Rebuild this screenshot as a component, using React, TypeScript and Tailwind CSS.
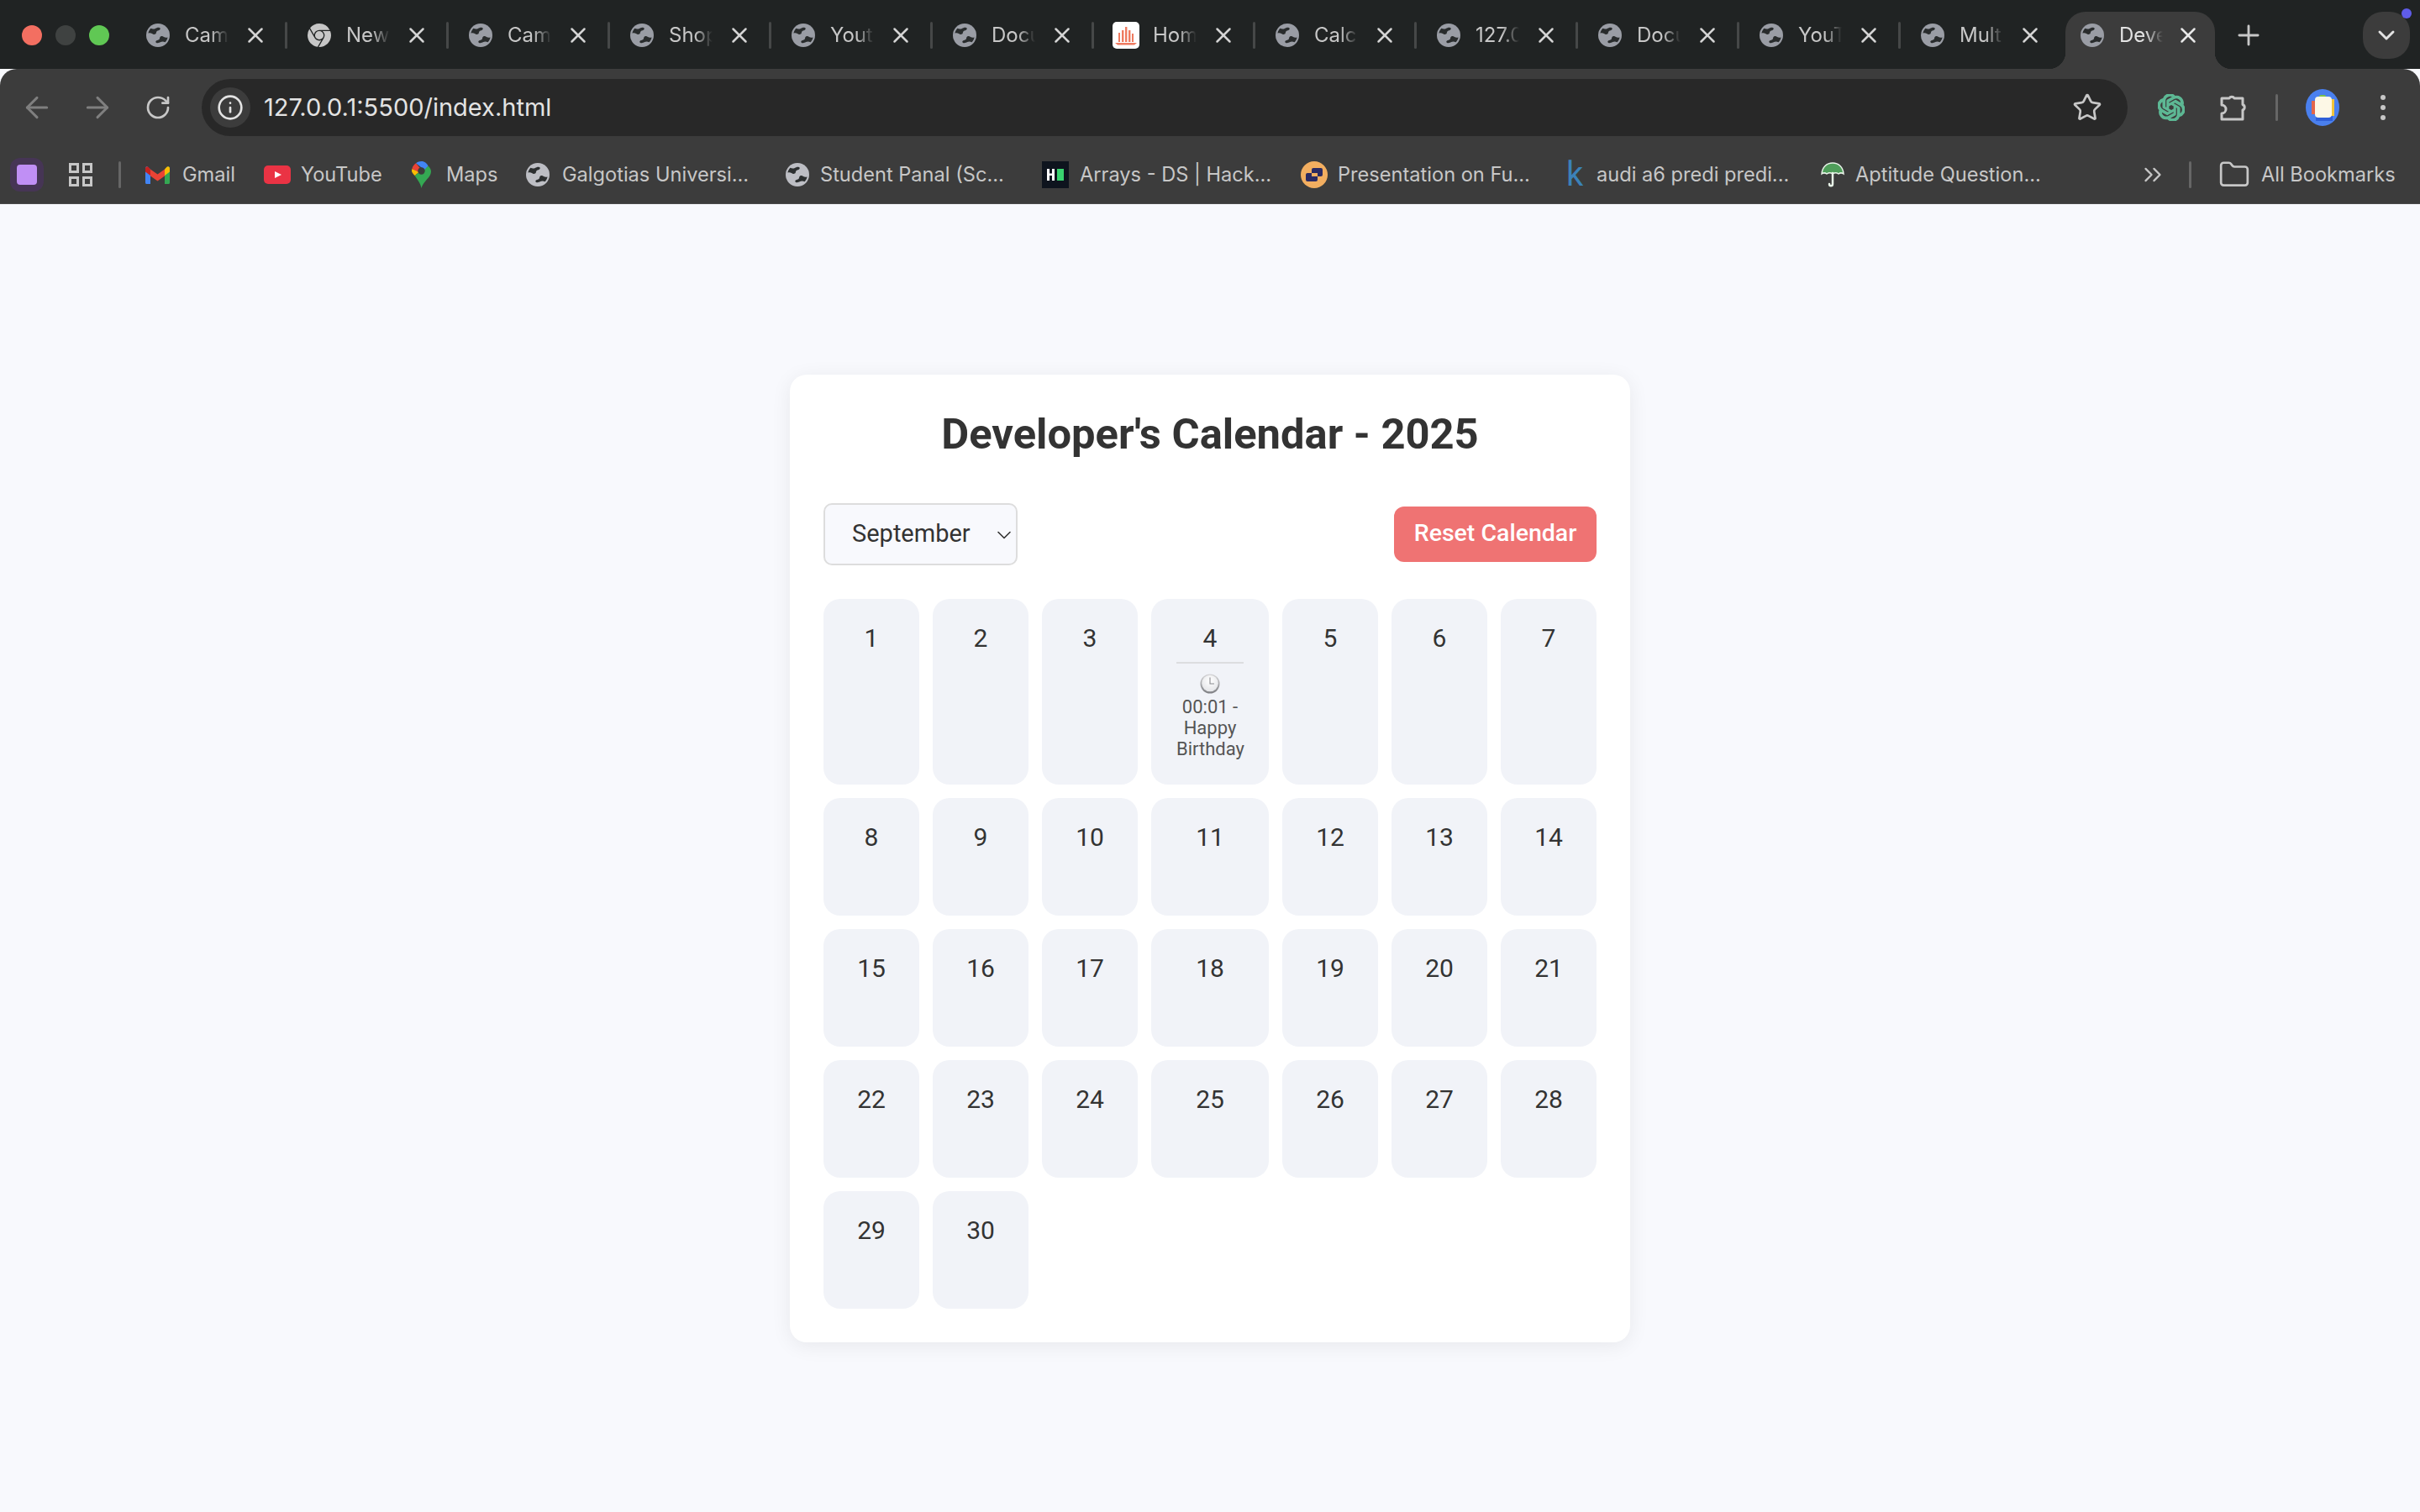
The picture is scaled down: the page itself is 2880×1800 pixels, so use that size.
import React from "react";
import { ArrowLeft, ArrowRight, RotateCw, Info, Star, X, Plus, ChevronDown, ChevronsRight, Folder } from "lucide-react";
import { SiOpenai, SiGooglechrome } from "react-icons/si";

const ui = "font-['Inter','Noto_Sans',sans-serif]";

function Globe({ className }: { className: string }) {
  return (
    <svg viewBox="0 0 16 16" className={className}>
      <circle cx="8" cy="8" r="8" fill="currentColor" />
      <path fill="#202323" fillOpacity="0.92" d="M3.1 3.3c1.1.5 2.2.5 3.1.1.9-.4 1.8-1 2.9-.5.7.3.6 1.1-.1 1.5-.8.4-1.6.5-2 1.1-.4.7-.1 1.3-.8 1.7-.7.4-1.5.2-2.2-.3-.8-.5-1.5-.6-2.6-.3.1-1.2.9-2.4 1.700-3.300z" />
      <path fill="#202323" fillOpacity="0.92" d="M12.9 12.7c-1.1-.5-2.2-.5-3.1-.1-.9.4-1.8 1-2.9.5-.7-.3-.6-1.1.1-1.5.8-.4 1.6-.5 2-1.1.4-.7.1-1.3.8-1.7.7-.4 1.5-.2 2.2.3.8.5 1.5.6 2.6.3-.1 1.2-.9 2.4-1.700 3.300z" />
    </svg>
  );
}

function HomeFav() {
  return (
    <div className="w-[32px] h-[32px] rounded-[5px] bg-white flex items-center justify-center">
      <svg viewBox="0 0 32 32" className="w-[32px] h-[32px]">
        <g fill="#ee7a5f">
          <rect x="7" y="13" width="2" height="11" />
          <rect x="11" y="10" width="2.4" height="14" />
          <rect x="15" y="6" width="2.4" height="18" />
          <rect x="19" y="10" width="2.4" height="14" />
          <rect x="23" y="14" width="2" height="10" />
          <path d="M3 25h26l-3 2.5H6z" />
        </g>
      </svg>
    </div>
  );
}

const tabs = [
  { t: "Cam", i: "g" },
  { t: "New", i: "c" },
  { t: "Cam", i: "g" },
  { t: "Shop", i: "g" },
  { t: "Yout", i: "g" },
  { t: "Docu", i: "g" },
  { t: "Hom", i: "h" },
  { t: "Calc", i: "g" },
  { t: "127.0", i: "g" },
  { t: "Docu", i: "g" },
  { t: "YouT", i: "g" },
  { t: "Mult", i: "g", last: true },
];

function Tab({ t, i, last }: { t: string; i: string; last?: boolean }) {
  return (
    <div className="w-[192px] h-[56px] flex items-center shrink-0">
      <div className="w-[24px] shrink-0" />
      <div className="w-[28px] flex items-center justify-center shrink-0">
        {i === "g" && <Globe className="w-[28px] h-[28px] text-[#9a9da5]" />}
        {i === "c" && <SiGooglechrome className="w-[28px] h-[28px] text-[#c7c7c7]" />}
        {i === "h" && <HomeFav />}
      </div>
      <div className="w-[18px] shrink-0" />
      <div className="w-[52px] overflow-hidden whitespace-nowrap text-[24px] leading-[32px] text-[#c7c7c7] [mask-image:linear-gradient(to_right,black_60%,transparent)]">
        {t}
      </div>
      <div className="w-[32px] flex justify-center ml-[16px] shrink-0">
        <X size={30} strokeWidth={2} className="text-[#d4d4d4]" />
      </div>
      <div className="flex-1" />
      <div className={"w-[3px] h-[32px] rounded-full " + (last ? "bg-transparent" : "bg-[#464848]")} />
    </div>
  );
}

function GmailIcon() {
  return (
    <svg viewBox="0 0 29 21" className="w-[29px] h-[21px]">
      <path fill="#4285f4" d="M0 2.5C0 1 1 0 2 0l4 3.5V21H1.5C.6 21 0 20.4 0 19.5z" />
      <path fill="#34a853" d="M29 2.5C29 1 28 0 27 0l-4 3.5V21h4.5c.9 0 1.5-.6 1.5-1.5z" />
      <path fill="#ea4335" d="M6 3.5v8l8.5 6 8.5-6v-8l-8.500 6z" />
      <path fill="#c5221f" d="M0 2.5v4L6 11V3.500L3.500.7C2-.5 0 .5 0 2.500z" />
      <path fill="#fbbc04" d="M29 2.5v4L23 11V3.500L25.500.7C27-.5 29 .5 29 2.500z" />
    </svg>
  );
}

function YouTubeIcon() {
  return (
    <svg viewBox="0 0 32 22" className="w-[32px] h-[22px]">
      <rect width="32" height="22" rx="5" fill="#ea3344" />
      <path d="M13 7l8 4-8 4z" fill="#fff" />
    </svg>
  );
}

function MapsIcon() {
  return (
    <svg viewBox="0 0 23 32" className="w-[23px] h-[32px]">
      <path fill="#34a853" d="M11.5 32C10 25 6 21 3.500 17L19.500 5.500c2.200 2 3.500 4.500 3.500 6.800 0 7-9 11-11.500 19.700z" />
      <path fill="#fbbc04" d="M3.500 17C1.500 15 0 13 0 11.500c0-.5 0-1.500.4-2.500L9 12.500z" />
      <path fill="#ea4335" d="M.4 9C1 6 3 3.500 5 2.300l5 6-2 4.500z" />
      <path fill="#4285f4" d="M5 2.300C7 .7 9 0 11.500 0c3 0 6 1.500 8 5.500L15 10l-4-3z" />
      <circle cx="11.500" cy="11.500" r="4.200" fill="#3c3c3c" />
    </svg>
  );
}

function HackIcon() {
  return (
    <svg viewBox="0 0 32 32" className="w-[32px] h-[32px]">
      <rect width="32" height="32" fill="#0e141e" />
      <path fill="#fff" d="M6 9h3v5.500h3V9h3v14h-3v-6H9v6H6z" />
      <rect x="18" y="9" width="8" height="14" fill="#39d36f" />
    </svg>
  );
}

function PresIcon() {
  return (
    <svg viewBox="0 0 32 32" className="w-[32px] h-[32px]">
      <circle cx="16" cy="16" r="16" fill="#f2ae60" />
      <rect x="13" y="8" width="13" height="10" rx="2" fill="#2a2a62" />
      <rect x="6" y="14" width="14" height="10" rx="2" fill="#2a2a62" />
      <rect x="13" y="14" width="7" height="4" fill="#f2ae60" />
    </svg>
  );
}

function UmbrellaIcon() {
  return (
    <svg viewBox="0 0 28 32" className="w-[28px] h-[32px]">
      <path d="M14 2C7 2 1.500 7 1 15c2-1.500 4-1.500 6 0 2-1.500 5-1.500 7 0 2-1.500 5-1.500 7 0 2-1.500 4-1.500 6 0C26.500 7 21 2 14 2z" fill="#4f9e5a" stroke="#e8f3e8" strokeWidth="1.500" />
      <path d="M14 14v13c0 3-4 3-4 0" fill="none" stroke="#e8f3e8" strokeWidth="2.500" strokeLinecap="round" />
    </svg>
  );
}

const bookmarks = [
  { w: "w-[141px]", icon: <GmailIcon />, gap: "w-[15px]", t: "Gmail" },
  { w: "w-[176px]", icon: <YouTubeIcon />, gap: "w-[12px]", t: "YouTube" },
  { w: "w-[136px]", icon: <MapsIcon />, gap: "w-[18px]", t: "Maps" },
  { w: "w-[309px]", icon: <Globe className="w-[28px] h-[28px] text-[#bdbec4]" />, gap: "w-[15px]", t: "Galgotias Universi..." },
  { w: "w-[305px]", icon: <Globe className="w-[28px] h-[28px] text-[#bdbec4]" />, gap: "w-[13px]", t: "Student Panal (Sc..." },
  { w: "w-[308px]", icon: <HackIcon />, gap: "w-[13px]", t: "Arrays - DS | Hack..." },
  { w: "w-[316px]", icon: <PresIcon />, gap: "w-[12px]", t: "Presentation on Fu..." },
  { w: "w-[303px]", icon: <span className="block w-[22px] text-[40px] leading-[40px] font-['Roboto',sans-serif] text-[#3b82b8]">k</span>, gap: "w-[14px]", t: "audi a6 predi predi..." },
  { w: "w-[370px]", icon: <UmbrellaIcon />, gap: "w-[13px]", t: "Aptitude Question..." },
];

function ClockEmoji() {
  return (
    <svg viewBox="0 0 24 24" className="w-[24px] h-[24px] mx-auto">
      <defs>
        <linearGradient id="clockRim" x1="0" y1="0" x2="0" y2="1">
          <stop offset="0" stopColor="#d6d6d8" />
          <stop offset="1" stopColor="#7f8084" />
        </linearGradient>
        <radialGradient id="clockFace" cx="0.5" cy="0.35" r="0.7">
          <stop offset="0" stopColor="#ffffff" />
          <stop offset="1" stopColor="#e2e3e6" />
        </radialGradient>
      </defs>
      <circle cx="12" cy="12" r="11.500" fill="url(#clockRim)" />
      <circle cx="12" cy="11.500" r="9.800" fill="url(#clockFace)" />
      <path d="M12 4.500V12h5" fill="none" stroke="#8a8b90" strokeWidth="1.100" />
    </svg>
  );
}

function Cell({ n, tall }: { n: number; tall?: boolean }) {
  return (
    <div className={"bg-[#f1f3f8] rounded-[20px] flex flex-col items-center text-center pt-[30px] " + (tall ? "h-[221px]" : "h-[140px]")}>
      <div className="text-[30px] leading-[34px] text-[#333333]">{n}</div>
      {n === 4 && (
        <div className="w-[80px] mt-[11px]">
          <div className="h-[2px] bg-[#dcdddf]" />
          <div className="mt-[12px] text-[22px] leading-[25px] text-[#555555]">
            <ClockEmoji />
            <div className="mt-[3px]">00:01 - Happy Birthday</div>
          </div>
        </div>
      )}
    </div>
  );
}

export default function App() {
  const days = Array.from({ length: 30 }, (_, i) => i + 1);
  return (
    <div className="min-h-[1800px] h-[1800px] flex flex-col bg-[#f8f9fd] overflow-hidden">
      {/* Tab strip */}
      <div className={"h-[82px] bg-[#202323] flex items-start pt-[14px] shrink-0 " + ui}>
        <div className="w-[150px] h-[56px] flex items-center shrink-0 pl-[26px] gap-[16px]">
          <span className="w-[24px] h-[24px] rounded-full bg-[#f36f61]" />
          <span className="w-[24px] h-[24px] rounded-full bg-[#3f4241]" />
          <span className="w-[24px] h-[24px] rounded-full bg-[#60c854]" />
        </div>
        {tabs.map((t, i) => (
          <Tab key={i} t={t.t} i={t.i} last={t.last} />
        ))}
        <div className="relative w-[178px] h-[68px] ml-[4px] bg-[#3c3c3c] rounded-t-[24px] shrink-0">
          <div className="absolute left-[-20px] bottom-0 w-[20px] h-[20px] bg-[radial-gradient(circle_at_0_0,transparent_20px,#3c3c3c_20.5px)]" />
          <div className="absolute right-[-20px] bottom-0 w-[20px] h-[20px] bg-[radial-gradient(circle_at_100%_0,transparent_20px,#3c3c3c_20.5px)]" />
          <div className="h-[56px] flex items-center pl-[18px]">
            <Globe className="w-[28px] h-[28px] text-[#9a9da5] shrink-0" />
            <div className="ml-[18px] w-[52px] overflow-hidden whitespace-nowrap text-[24px] leading-[32px] text-[#e3e3e3] [mask-image:linear-gradient(to_right,black_60%,transparent)]">Deve</div>
            <X size={30} strokeWidth={2} className="ml-[15px] text-[#e8e8e8] shrink-0" />
          </div>
        </div>
        <div className="ml-[21px] w-[38px] h-[56px] flex items-center justify-center shrink-0">
          <Plus size={38} strokeWidth={1.8} className="text-[#c7c7c7]" />
        </div>
        <div className="relative ml-[117px] w-[56px] h-[56px] rounded-[24px] bg-[#3c3c3c] flex items-center justify-center shrink-0">
          <ChevronDown size={32} strokeWidth={2.2} className="text-[#e3e3e3]" />
          <span className="absolute right-[-2px] top-[-4px] w-[12px] h-[12px] rounded-full bg-[#5f5ce8]" />
        </div>
      </div>

      {/* Toolbar + bookmarks */}
      <div className={"bg-[#3c3c3c] rounded-t-[20px] h-[161px] shrink-0 border-b border-[#4a4a4a] " + ui}>
        <div className="h-[92px] pt-[12px] pl-[8px] flex items-start">
          <div className="w-[72px] h-[68px] flex items-center justify-center">
            <ArrowLeft size={40} strokeWidth={1.8} className="text-[#7f7f7f]" />
          </div>
          <div className="w-[72px] h-[68px] flex items-center justify-center">
            <ArrowRight size={40} strokeWidth={1.8} className="text-[#7f7f7f]" />
          </div>
          <div className="w-[72px] h-[68px] flex items-center justify-center">
            <RotateCw size={32} strokeWidth={2} className="text-[#c7c7c7]" />
          </div>
          <div className="ml-[16px] w-[2292px] h-[68px] rounded-full bg-[#282828] flex items-center pl-[10px] pr-[30px]">
            <div className="w-[48px] h-[48px] rounded-full bg-[#3c3c3c] flex items-center justify-center">
              <Info size={32} strokeWidth={2} className="text-[#e3e3e3]" />
            </div>
            <div className="ml-[16px] text-[29px] leading-[36px] text-[#e3e3e3]">127.0.0.1:5500/index.html</div>
            <div className="flex-1" />
            <Star size={36} strokeWidth={1.8} className="text-[#c7c7c7]" />
          </div>
          <div className="ml-[30px] w-[44px] h-[68px] flex items-center justify-center">
            <SiOpenai className="w-[32px] h-[32px] text-[#5db894] [stroke-width:1.2px]" />
          </div>
          <div className="ml-[29px] w-[44px] h-[68px] flex items-center justify-center">
            <svg viewBox="0 0 34 34" className="w-[34px] h-[34px]" fill="none" stroke="#c7c7c7" strokeWidth="3" strokeLinejoin="round">
              <path d="M4 6H13A3.500 3.500 0 0 1 19 6H29V13.500A3.500 3.500 0 0 1 29 20V31H4V24A5 5 0 0 0 4 14Z" />
            </svg>
          </div>
          <div className="ml-[29px] w-[3px] h-[32px] mt-[18px] rounded-full bg-[#666666]" />
          <div className="ml-[33px] w-[40px] h-[68px] flex items-center justify-center">
            <svg viewBox="0 0 40 44" className="w-[40px] h-[44px]">
              <ellipse cx="20" cy="22" rx="20" ry="22" fill="#4a80ee" />
              <rect x="12" y="30" width="20" height="8" fill="#2f5fd8" />
              <rect x="7" y="14" width="6" height="16" fill="#e2664a" />
              <rect x="28" y="12" width="6" height="20" fill="#f1c33a" />
              <rect x="16" y="7" width="8" height="4" rx="2" fill="#7cc24a" />
              <rect x="11" y="9" width="20" height="25" rx="4" fill="#fdf8e6" />
            </svg>
          </div>
          <div className="ml-[49px] w-[6px] h-[68px] flex flex-col items-center justify-center gap-[6px]">
            <span className="w-[6px] h-[6px] rounded-full bg-[#c7c7c7]" />
            <span className="w-[6px] h-[6px] rounded-full bg-[#c7c7c7]" />
            <span className="w-[6px] h-[6px] rounded-full bg-[#c7c7c7]" />
          </div>
        </div>

        <div className="h-[68px] flex items-center text-[23.6px] leading-[32px] text-[#c7c7c7]">
          <div className="ml-[12px] w-[40px] h-[40px] rounded-[12px] bg-[#463555] flex items-center justify-center shrink-0">
            <span className="w-[24px] h-[24px] rounded-[4px] bg-[#c08ff5]" />
          </div>
          <svg viewBox="0 0 28 28" className="ml-[30px] w-[28px] h-[28px] shrink-0" fill="none" stroke="#c7c7c7" strokeWidth="3">
            <rect x="1.500" y="1.500" width="9" height="9" />
            <rect x="17.500" y="1.500" width="9" height="9" />
            <rect x="1.500" y="17.500" width="9" height="9" />
            <rect x="17.500" y="17.500" width="9" height="9" />
          </svg>
          <div className="ml-[31px] w-[3px] h-[32px] rounded-full bg-[#666666] shrink-0" />
          <div className="ml-[29px] flex items-center">
            {bookmarks.map((b) => (
              <div key={b.t} className={"flex items-center shrink-0 whitespace-nowrap " + b.w}>
                {b.icon}
                <div className={"shrink-0 " + b.gap} />
                <span>{b.t}</span>
              </div>
            ))}
          </div>
          <ChevronsRight size={34} strokeWidth={1.6} className="ml-[8px] text-[#c7c7c7] shrink-0" />
          <div className="ml-[26px] w-[3px] h-[32px] rounded-full bg-[#666666] shrink-0" />
          <Folder size={38} strokeWidth={1.7} className="ml-[32px] text-[#c7c7c7] shrink-0" />
          <span className="ml-[13px] whitespace-nowrap">All Bookmarks</span>
        </div>
      </div>

      {/* Page */}
      <div className="flex-1 flex items-center justify-center font-['Roboto',sans-serif]">
        <div className="w-[1000px] bg-white rounded-[20px] p-[40px] shadow-[0_4px_24px_rgba(0,0,0,0.07)]">
          <h1 className="text-[50.7px] leading-[60px] pt-[1px] h-[60px] font-bold text-[#333333] text-center mb-[53px]">Developer's Calendar - 2025</h1>
          <div className="flex items-center justify-between mb-[40px]">
            <div className="relative">
              <select
                defaultValue="September"
                className="appearance-none w-[231px] h-[74px] pl-[32px] bg-[#f8f9fd] border-2 border-[#dddddd] rounded-[10px] text-[29px] text-[#333333] outline-none"
              >
                {["January", "February", "March", "April", "May", "June", "July", "August", "September", "October", "November", "December"].map((m) => (
                  <option key={m}>{m}</option>
                ))}
              </select>
              <ChevronDown size={28} strokeWidth={1.4} className="absolute right-[2px] top-[24px] text-[#333333] pointer-events-none" />
            </div>
            <button className="w-[241px] h-[66px] rounded-[12px] bg-[#ef7373] text-white text-[28.5px] font-medium">Reset Calendar</button>
          </div>
          <div className="grid grid-cols-[114px_114px_114px_140px_114px_114px_114px] gap-[16px]">
            {days.map((n) => (
              <Cell key={n} n={n} tall={n <= 7} />
            ))}
          </div>
        </div>
      </div>
    </div>
  );
}
